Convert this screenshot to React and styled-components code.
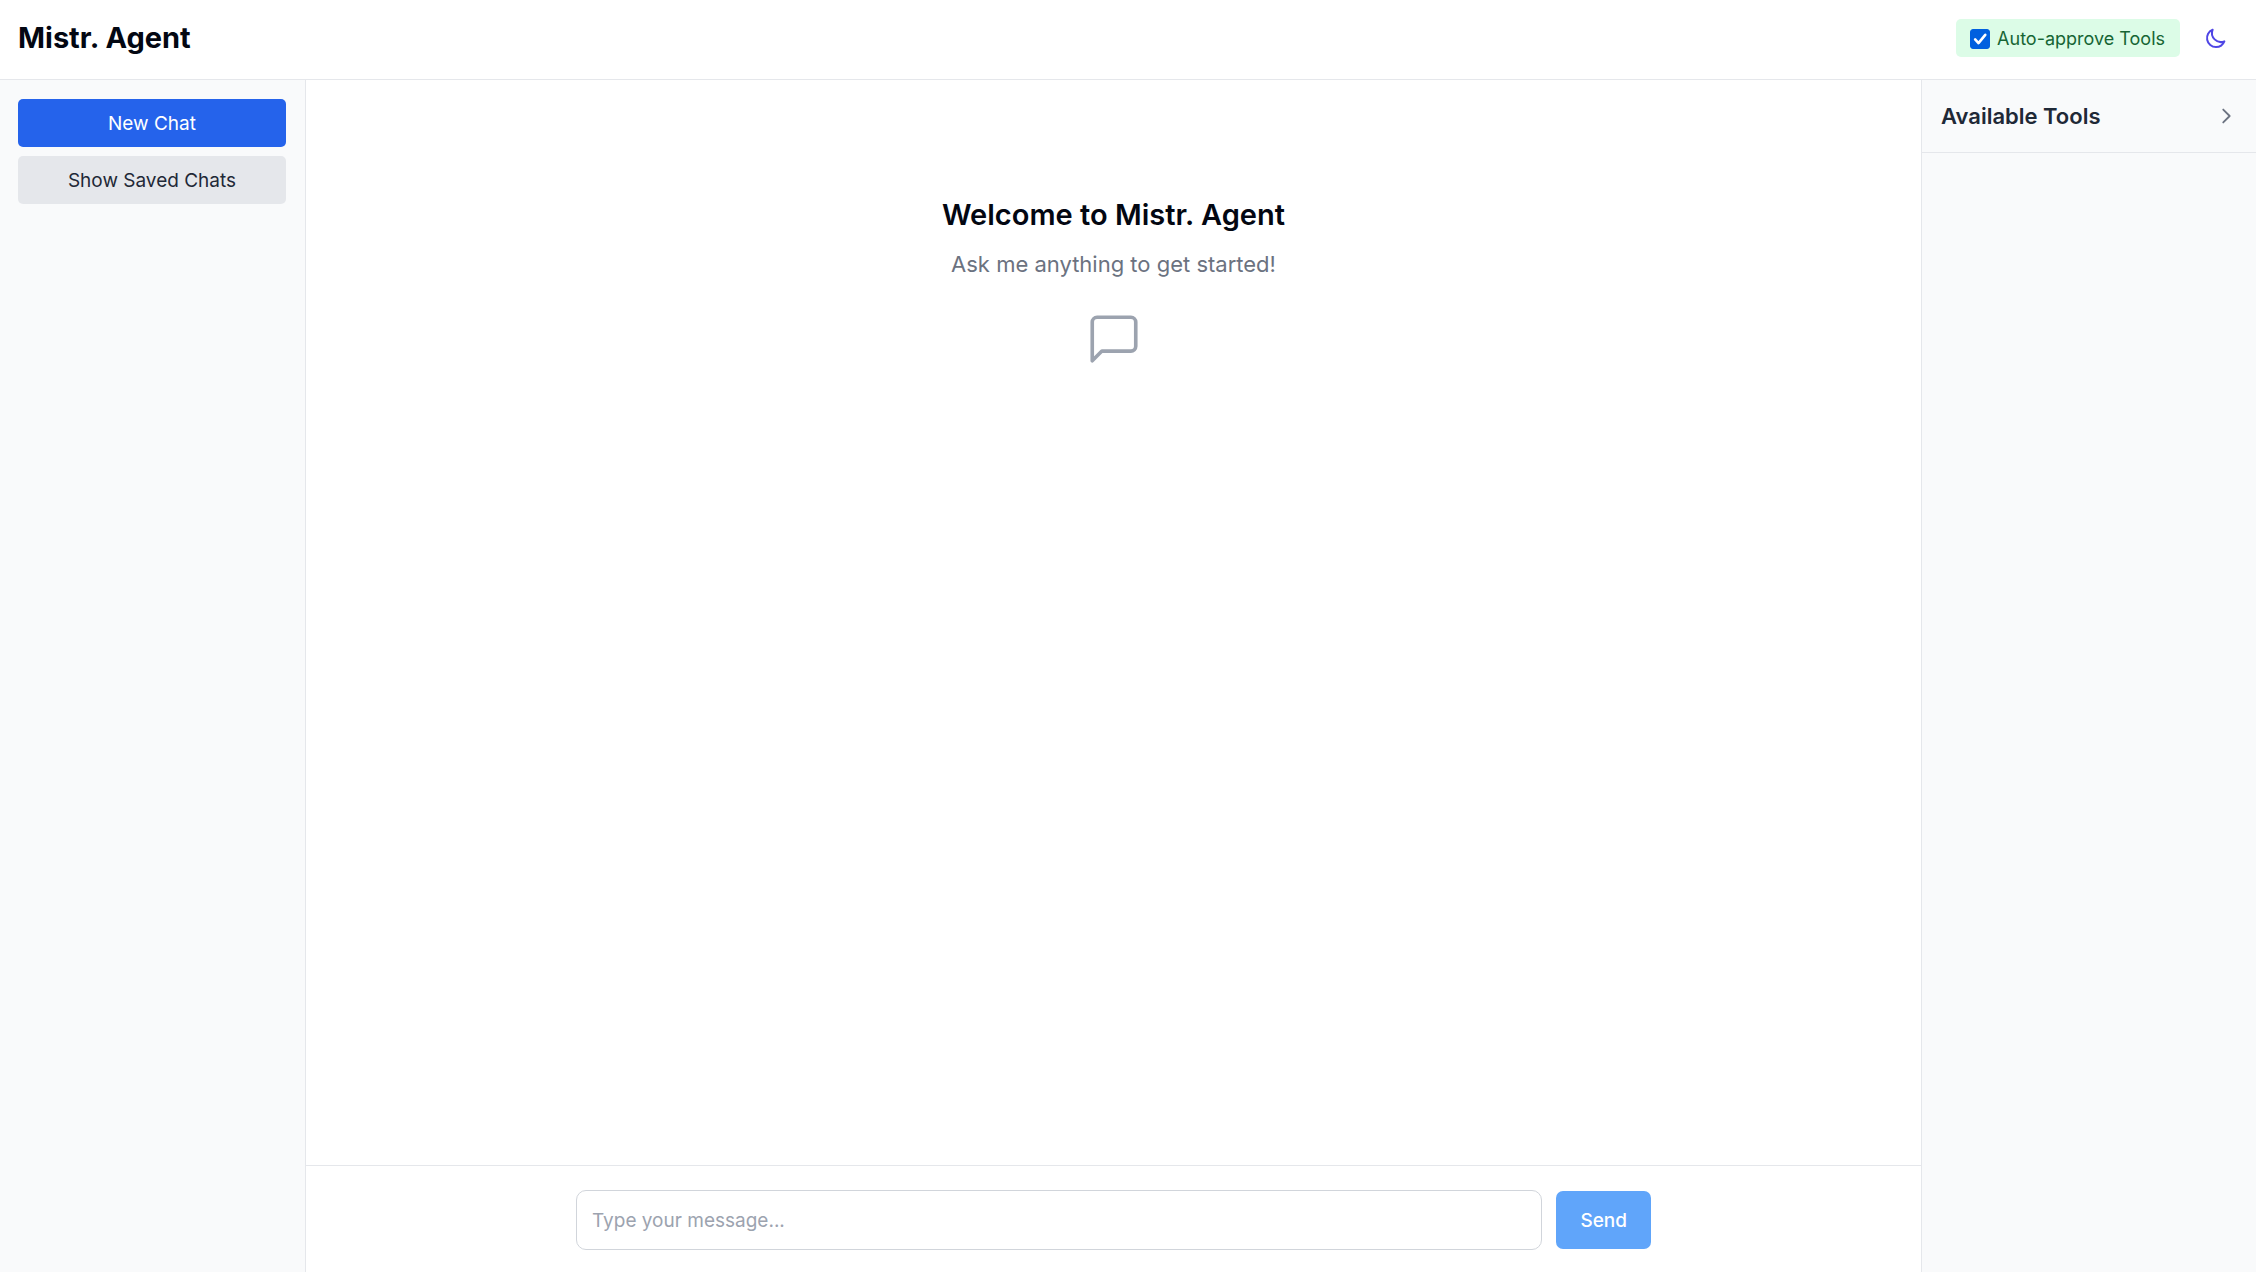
import React, { useState } from "react";
import styled, { createGlobalStyle } from "styled-components";

const GlobalStyle = createGlobalStyle`
  *, *::before, *::after { box-sizing: border-box; }
  body {
    margin: 0;
    font-family: Inter, "Liberation Sans", sans-serif;
    font-size: 19px;
    line-height: 29px;
    color: #030712;
    background: #ffffff;
  }
  button, input { font: inherit; color: inherit; }
  h1, h2, p { margin: 0; }
`;

const Page = styled.div`
  display: flex;
  flex-direction: column;
  min-height: 100vh;
`;

const TopBar = styled.header`
  display: flex;
  align-items: center;
  justify-content: space-between;
  padding: 17px 19px 20px 18px;
  border-bottom: 1px solid #e5e7eb;
`;

const Title = styled.h1`
  font-size: 29px;
  line-height: 42px;
  font-weight: 700;
`;

const TopActions = styled.div`
  display: flex;
  align-items: center;
  gap: 15px;
`;

const ApproveLabel = styled.label`
  display: flex;
  align-items: center;
  gap: 7px;
  padding: 5px 15px 4px 14px;
  border-radius: 5px;
  background: #dcfce7;
  color: #166534;
  font-size: 18px;
  line-height: 29px;
  cursor: pointer;
`;

const CheckSlot = styled.span`
  display: grid;
  place-items: center;
  > * { grid-area: 1 / 1; }
`;

const CheckInput = styled.input`
  appearance: none;
  width: 20px;
  height: 20px;
  margin: 0;
  border: 1px solid #9ca3af;
  border-radius: 3px;
  background: #ffffff;
  &:checked {
    border-color: #0060df;
    background: #0060df;
  }
`;

const CheckMark = styled.span`
  display: flex;
  color: #ffffff;
  pointer-events: none;
`;

const IconButton = styled.button`
  display: flex;
  padding: ${(p) => p.$pad}px;
  border: 0;
  border-radius: 10px;
  background: transparent;
  color: ${(p) => p.$color};
  cursor: pointer;
`;

const Body = styled.div`
  display: flex;
  flex: 1;
`;

const Sidebar = styled.aside`
  display: flex;
  flex-direction: column;
  gap: 9px;
  width: 306px;
  padding: 19px 19px 19px 18px;
  border-right: 1px solid #e5e7eb;
  background: #f9fafb;
`;

const SideButton = styled.button`
  padding: 10px 19px 9px;
  border: 0;
  border-radius: 5px;
  line-height: 29px;
  background: ${(p) => (p.$primary ? "#2563eb" : "#e5e7eb")};
  color: ${(p) => (p.$primary ? "#ffffff" : "#1f2937")};
  cursor: pointer;
`;

const Main = styled.main`
  display: flex;
  flex: 1;
  flex-direction: column;
`;

const Welcome = styled.section`
  display: flex;
  flex: 1;
  flex-direction: column;
  align-items: center;
  padding: 115px 19px 19px;
`;

const WelcomeTitle = styled.h2`
  margin-bottom: 14px;
  font-size: 29px;
  line-height: 39px;
  font-weight: 600;
`;

const WelcomeText = styled.p`
  margin-bottom: 30px;
  font-size: 22px;
  line-height: 32px;
  color: #6b7280;
`;

const BubbleIcon = styled.span`
  display: flex;
  color: #9ca3af;
`;

const Composer = styled.footer`
  padding: 24px 19px 22px;
  border-top: 1px solid #e5e7eb;
`;

const ComposerForm = styled.form`
  display: flex;
  align-items: center;
  gap: 14px;
  max-width: 1075px;
  margin: 0 auto;
`;

const MessageInput = styled.input`
  flex: 1;
  min-width: 0;
  height: 60px;
  padding: 0 15px;
  border: 1px solid #d1d5db;
  border-radius: 10px;
  background: #ffffff;
  outline: none;
  &::placeholder { color: #9ca3af; opacity: 1; }
`;

const SendButton = styled.button`
  padding: 15px 24px 14px;
  border: 0;
  border-radius: 7px;
  line-height: 29px;
  font-weight: 500;
  background: #60a5fa;
  color: #ffffff;
`;

const ToolsPanel = styled.aside`
  width: 335px;
  border-left: 1px solid #e5e7eb;
  background: #f9fafb;
`;

const ToolsHeader = styled.div`
  display: flex;
  align-items: center;
  justify-content: space-between;
  padding: 19px;
  border-bottom: 1px solid #e5e7eb;
`;

const ToolsTitle = styled.h2`
  font-size: 22px;
  line-height: 34px;
  font-weight: 600;
  color: #1f2937;
`;

function StrokeIcon({ size, width, d }) {
  return (
    <svg
      width={size}
      height={size}
      viewBox="0 0 24 24"
      fill="none"
      stroke="currentColor"
      strokeWidth={width}
      strokeLinecap="round"
      strokeLinejoin="round"
      aria-hidden="true"
    >
      <path d={d} />
    </svg>
  );
}

const MOON = "M20.354 15.354A9 9 0 018.646 3.646 9.003 9.003 0 0012 21a9.003 9.003 0 008.354-5.646z";
const CHEVRON = "M9 5l7 7-7 7";
const MESSAGE = "M21 15a2 2 0 0 1-2 2H7l-4 4V5a2 2 0 0 1 2-2h14a2 2 0 0 1 2 2z";
const CHECK = "M5.500 12.500l4.500 5L19 6.500";

export default function App() {
  const [autoApprove, setAutoApprove] = useState(true);
  const [message, setMessage] = useState("");

  return (
    <Page>
      <GlobalStyle />
      <TopBar>
        <Title>Mistr. Agent</Title>
        <TopActions>
          <ApproveLabel htmlFor="auto-approve">
            <CheckSlot>
              <CheckInput
                id="auto-approve"
                type="checkbox"
                checked={autoApprove}
                onChange={(e) => setAutoApprove(e.target.checked)}
              />
              {autoApprove && (
                <CheckMark>
                  <StrokeIcon size={18} width={3.5} d={CHECK} />
                </CheckMark>
              )}
            </CheckSlot>
            Auto-approve Tools
          </ApproveLabel>
          <IconButton type="button" aria-label="Toggle dark mode" $pad={9} $color="#4f46e5">
            <StrokeIcon size={24} width={2} d={MOON} />
          </IconButton>
        </TopActions>
      </TopBar>
      <Body>
        <Sidebar>
          <SideButton type="button" $primary>New Chat</SideButton>
          <SideButton type="button">Show Saved Chats</SideButton>
        </Sidebar>
        <Main>
          <Welcome>
            <WelcomeTitle>Welcome to Mistr. Agent</WelcomeTitle>
            <WelcomeText>Ask me anything to get started!</WelcomeText>
            <BubbleIcon>
              <StrokeIcon size={58} width={1.5} d={MESSAGE} />
            </BubbleIcon>
          </Welcome>
          <Composer>
            <ComposerForm onSubmit={(e) => e.preventDefault()}>
              <MessageInput
                type="text"
                aria-label="Message"
                placeholder="Type your message..."
                value={message}
                onChange={(e) => setMessage(e.target.value)}
              />
              <SendButton type="submit">Send</SendButton>
            </ComposerForm>
          </Composer>
        </Main>
        <ToolsPanel>
          <ToolsHeader>
            <ToolsTitle>Available Tools</ToolsTitle>
            <IconButton type="button" aria-label="Collapse tools" $pad={0} $color="#6b7280">
              <StrokeIcon size={22} width={2} d={CHEVRON} />
            </IconButton>
          </ToolsHeader>
        </ToolsPanel>
      </Body>
    </Page>
  );
}
